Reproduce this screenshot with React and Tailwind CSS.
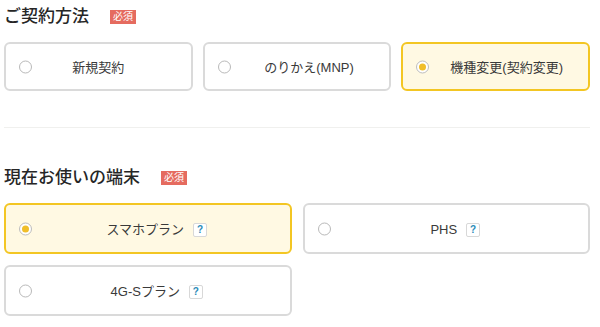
import React, { useState } from "react";

const font = { fontFamily: '"Liberation Sans", "Noto Sans CJK JP", sans-serif' };

function Required() {
  return (
    <span className="ml-[21px] inline-flex h-[14px] items-center bg-[#e56b5f] px-[3px] text-[10px] leading-none text-white">
      必須
    </span>
  );
}

function Help() {
  return (
    <span className="ml-[9px] inline-flex h-[14px] w-[14px] items-center justify-center rounded-[2px] border border-[#d8d8d8] bg-white text-[10px] font-bold leading-none text-[#2b8bb8]">
      ?
    </span>
  );
}

function Choice({ label, selected, help, shift, onClick, tall }) {
  return (
    <div
      onClick={onClick}
      className={
        "relative flex cursor-pointer items-center justify-center rounded-[6px] border-2 " +
        (tall ? "h-[51px] " : "h-[49px] ") +
        (selected ? "border-[#f3c623] bg-[#fff9e3]" : "border-[#dadada] bg-white")
      }
    >
      <span
        className={
          "absolute left-[13px] top-1/2 flex h-[13px] w-[13px] -translate-y-1/2 items-center justify-center rounded-full border " +
          (selected ? "border-[#bdbdbd] bg-white" : "border-[#b9b9b9] bg-white")
        }
      >
        {selected && <span className="h-[7px] w-[7px] rounded-full bg-[#f0be2a]" />}
      </span>
      <span className={"flex items-center pt-[3px] text-[13px] text-[#3a3a3a] " + shift}>
        {label}
        {help && <Help />}
      </span>
    </div>
  );
}

export default function App() {
  const [contract, setContract] = useState(2);
  const [device, setDevice] = useState(0);

  const contracts = [
    { label: "新規契約", shift: "" },
    { label: "のりかえ(MNP)", shift: "pl-[24px]" },
    { label: "機種変更(契約変更)", shift: "pl-[22px]" },
  ];
  const devices = ["スマホプラン", "PHS", "4G-Sプラン"];

  return (
    <div className="h-[327px] w-[600px] overflow-hidden bg-white" style={font}>
      <div className="ml-[4px] w-[586px]">
        <div className="flex items-center pt-[6px]">
          <h2 className="text-[17px] font-medium leading-[22px] text-[#262626]">ご契約方法</h2>
          <Required />
        </div>
        <div className="mt-[14px] grid grid-cols-3 gap-[10px]">
          {contracts.map((c, i) => (
            <Choice
              key={c.label}
              label={c.label}
              shift={c.shift}
              selected={contract === i}
              onClick={() => setContract(i)}
            />
          ))}
        </div>
        <div className="mt-[36px] h-px bg-[#f0f0ee]" />
        <div className="mt-[39px] flex items-center">
          <h2 className="text-[17px] font-medium leading-[22px] text-[#262626]">現在お使いの端末</h2>
          <Required />
        </div>
        <div className="mt-[14px] grid grid-cols-2 gap-x-[11px] gap-y-[11px]">
          {devices.map((d, i) => (
            <Choice
              key={d}
              label={d}
              help
              tall
              shift="pl-[18px]"
              selected={device === i}
              onClick={() => setDevice(i)}
            />
          ))}
        </div>
      </div>
    </div>
  );
}
